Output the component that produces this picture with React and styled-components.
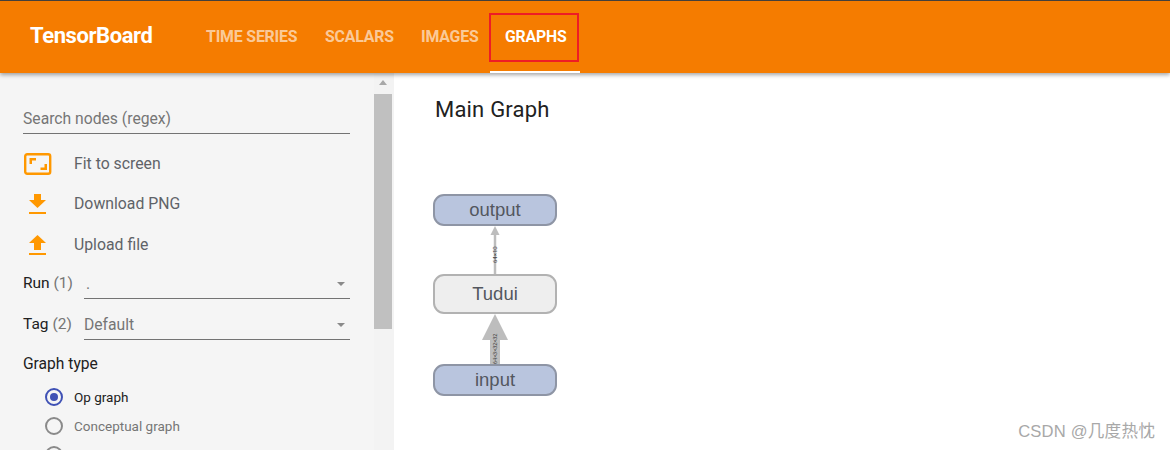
import React from "react";
import styled, { createGlobalStyle } from "styled-components";

const Global = createGlobalStyle`
  html, body { margin: 0; padding: 0; background: #fff; }
  body { font-family: Roboto, "Noto Sans CJK SC", sans-serif; }
  * { box-sizing: border-box; }
`;
const Page = styled.div`
  width: 1170px; height: 450px; overflow: hidden; position: relative;
  display: flex; flex-direction: column; background: #fff;
`;
const Header = styled.header`
  flex: none; height: 73px; background: #f57c00; border-top: 1px solid #44403c;
  display: flex; align-items: stretch; padding-left: 30px;
  box-shadow: 0 2px 4px rgba(0,0,0,.35); position: relative; z-index: 2;
`;
const Brand = styled.div`
  width: 164px; padding-top: 21px; color: #fff; font-size: 22px; font-weight: 700; line-height: 28px; letter-spacing: -0.42px;
`;
const Tabs = styled.nav`display: flex; margin-left: 1px;`;
const Tab = styled.div`
  position: relative; width: ${p => p.$w}px; padding: 26px 0 0 ${p => p.$pad}px;
  color: ${p => p.$active ? "#fff" : "rgba(255,255,255,.62)"};
  font-size: 15.8px; font-weight: 700; line-height: 20px; letter-spacing: -0.15px;
  border-bottom: ${p => p.$active ? "2px solid #fff" : "0"};
`;
const Highlight = styled.div`
  position: absolute; left: -1px; top: 12px; width: 90px; height: 49px; border: 2px solid #ee1c25;
`;
const Body = styled.div`flex: 1; display: flex; min-height: 0;`;
const Sidebar = styled.aside`
  width: 374px; flex: none; background: #f5f5f5; padding: 33px 24px 0 23px; overflow: hidden;
`;
const Search = styled.div`
  height: 28px; padding-top: 1px; border-bottom: 1px solid #737373; color: #757575; font-size: 15.7px; line-height: 24px;
`;
const Actions = styled.div`display: flex; flex-direction: column; margin-top: 10px;`;
const Action = styled.div`
  height: ${p => p.$h}px; display: flex; align-items: center; color: #5f6368; font-size: 15.8px;
`;
const IconSlot = styled.span`width: 51px; flex: none; display: flex; align-items: center; padding-left: 1px;`;
const Field = styled.div`display: flex; align-items: flex-end; height: ${p => p.$h}px;`;
const FieldLabel = styled.div`
  width: 61px; flex: none; color: #212121; font-size: 15.5px; line-height: 20px; padding-bottom: 6px;
  span { color: #757575; }
`;
const Select = styled.div`
  flex: 1; height: 30px; border-bottom: 1px solid #737373; color: #757575; font-size: 15.7px; line-height: 24px;
  display: flex; justify-content: space-between; align-items: center; padding: 0 5px 0 0;
`;
const RunValue = styled.span`margin-left: 2px;`;
const Caret = styled.i`
  width: 0; height: 0; border: 4px solid transparent; border-top: 4px solid #8a8a8a; border-bottom: 0;
`;
const GroupTitle = styled.div`margin-top: 14px; color: #212121; font-size: 15.6px; line-height: 20px;`;
const Radios = styled.div`display: flex; flex-direction: column; gap: 9px; margin-top: 13px; padding-left: 22px;`;
const Radio = styled.div`
  height: 20px; display: flex; align-items: center; gap: 11px; font-size: 13.5px;
  color: ${p => p.$on ? "#212121" : "#757575"};
`;
const Dot = styled.span`
  width: 18px; height: 18px; border-radius: 50%; flex: none; background: #f5f5f5;
  border: 2px solid ${p => p.$on ? "#3f51b5" : "#8a8a8a"};
  display: flex; align-items: center; justify-content: center;
  &::after { content: ""; width: 8px; height: 8px; border-radius: 50%; background: ${p => p.$on ? "#3f51b5" : "transparent"}; }
`;
const Scrollbar = styled.div`width: 20px; flex: none; background: #f3f3f3; padding: 0 2px 0 0; display: flex; flex-direction: column; align-items: center;`;
const ScrollUp = styled.i`
  display: block; width: 0; height: 0; margin-top: 7px; border: 4.5px solid transparent; border-bottom: 5px solid #a8a8a8; border-top: 0;
`;
const Thumb = styled.div`width: 18px; height: 235px; margin-top: 9px; background: #c0c0c0;`;
const Main = styled.main`flex: 1; padding: 22px 0 0 41px; position: relative;`;
const Title = styled.h1`margin: 0; font-size: 22px; font-weight: 400; line-height: 30px; color: #212121; letter-spacing: 0.2px;`;
const Graph = styled.svg`display: block; margin: 69px 0 0 -2px;`;
const Watermark = styled.div`
  position: absolute; right: 15px; bottom: 8px; font-size: 16.6px; line-height: 20px; color: #a8a8a8; letter-spacing: .2px;
  font-family: "Liberation Sans", "Noto Sans CJK SC", sans-serif;
`;

const FitIcon = () => (
  <svg width="28" height="22" viewBox="0 0 28 22">
    <rect x="1.2" y="1.2" width="25" height="19.6" rx="2" fill="none" stroke="#ff9800" strokeWidth="2.4" />
    <path d="M5.5 11V5h6.5v2.5H8V11zM23 11v6h-6.5v-2.5h4V11z" fill="#ff9800" />
  </svg>
);
const DownIcon = () => (
  <svg width="28" height="22" viewBox="0 0 28 22">
    <path d="M10 1h7v6h5l-8.500 8L5 7h5zM5 19h17v2H5z" fill="#ff9800" />
  </svg>
);
const UpIcon = () => (
  <svg width="28" height="22" viewBox="0 0 28 22">
    <path d="M10 16h7V9h5L13.500 1 5 9h5zM5 19h17v2H5z" fill="#ff9800" />
  </svg>
);

const Node = ({ y, h = 30, fill, stroke, label }) => (
  <g>
    <rect x="1" y={y} width="122" height={h} rx="10" fill={fill} stroke={stroke} strokeWidth="2" />
    <text x="62" y={y + h / 2 + 6} textAnchor="middle" fontFamily="Liberation Sans, sans-serif" fontSize="18.500" fill="#53575e">{label}</text>
  </g>
);

export default function App() {
  return (
    <Page>
      <Global />
      <Header>
        <Brand>TensorBoard</Brand>
        <Tabs>
          <Tab $w={118} $pad={11}>TIME SERIES</Tab>
          <Tab $w={96} $pad={12}>SCALARS</Tab>
          <Tab $w={81} $pad={12}>IMAGES</Tab>
          <Tab $w={90} $pad={15} $active>GRAPHS<Highlight /></Tab>
        </Tabs>
      </Header>
      <Body>
        <Sidebar>
          <Search>Search nodes (regex)</Search>
          <Actions>
            <Action $h={39}><IconSlot><FitIcon /></IconSlot>Fit to screen</Action>
            <Action $h={41}><IconSlot><DownIcon /></IconSlot>Download PNG</Action>
            <Action $h={41}><IconSlot><UpIcon /></IconSlot>Upload file</Action>
          </Actions>
          <Field $h={34}>
            <FieldLabel>Run <span>(1)</span></FieldLabel>
            <Select><RunValue>.</RunValue><Caret /></Select>
          </Field>
          <Field $h={41}>
            <FieldLabel>Tag <span>(2)</span></FieldLabel>
            <Select>Default<Caret /></Select>
          </Field>
          <GroupTitle>Graph type</GroupTitle>
          <Radios>
            <Radio $on><Dot $on />Op graph</Radio>
            <Radio><Dot />Conceptual graph</Radio>
            <Radio><Dot />Profile</Radio>
          </Radios>
        </Sidebar>
        <Scrollbar>
          <ScrollUp />
          <Thumb />
        </Scrollbar>
        <Main>
          <Title>Main Graph</Title>
          <Graph width="126" height="204" viewBox="0 0 126 204">
            <Node y={1} fill="#b9c5de" stroke="#8e95a5" label="output" />
            <path d="M62 81V40" stroke="#bdbdbd" strokeWidth="2.5" />
            <path d="M62 32l-4.500 9h9z" fill="#bdbdbd" />
            <text transform="translate(64 69) rotate(-90)" fontSize="6" fontFamily="Roboto, sans-serif" fill="#444">64×10</text>
            <Node y={81} h={38} fill="#eeeeee" stroke="#b2b2b2" label="Tudui" />
            <path d="M62 171V140" stroke="#bdbdbd" strokeWidth="10" />
            <path d="M62 120l-13 26h26z" fill="#bdbdbd" />
            <text transform="translate(64 170) rotate(-90)" fontSize="5.500" fontFamily="Roboto, sans-serif" fill="#444">64×3×32×32</text>
            <Node y={171} fill="#b9c5de" stroke="#8e95a5" label="input" />
          </Graph>
          <Watermark>CSDN @几度热忱</Watermark>
        </Main>
      </Body>
    </Page>
  );
}
